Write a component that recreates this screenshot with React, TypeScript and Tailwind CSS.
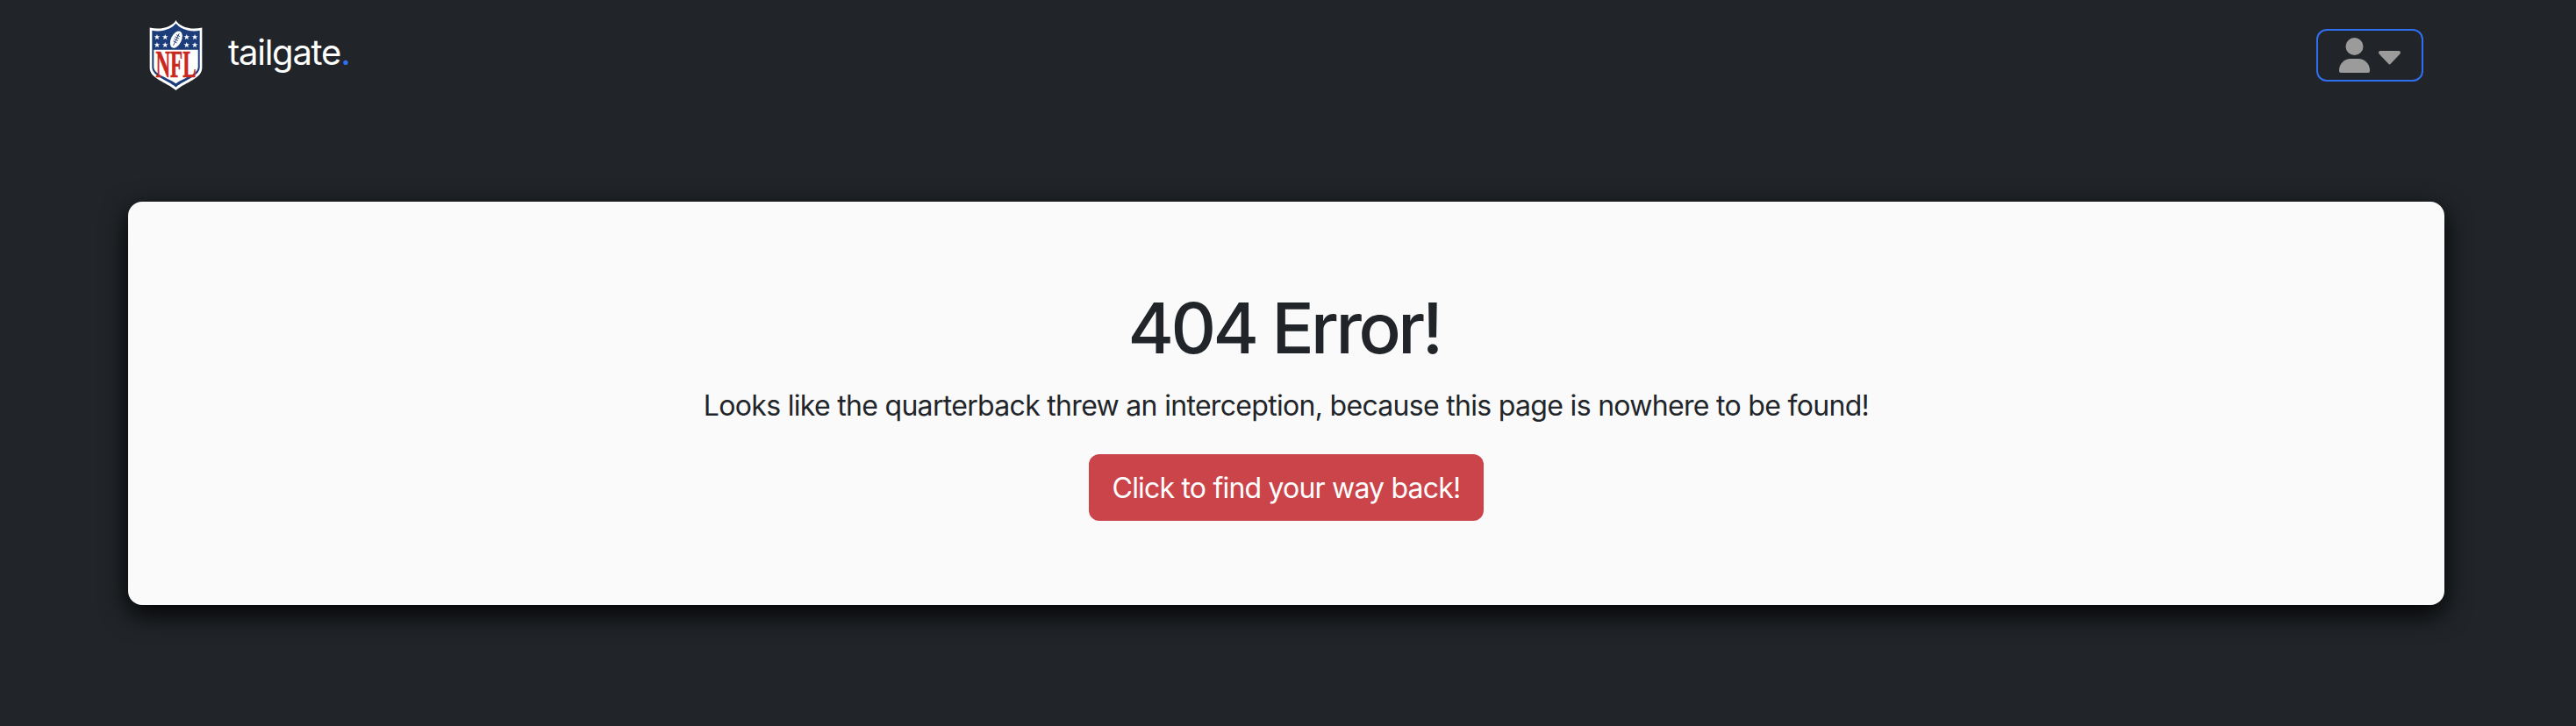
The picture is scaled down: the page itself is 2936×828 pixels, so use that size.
import React from 'react';

function Star({ x, y }: { x: number; y: number }) {
  return (
    <polygon
      transform={`translate(${x} ${y}) scale(10.5)`}
      points="0,-1 0.24,-0.31 0.95,-0.31 0.38,0.12 0.59,0.81 0,0.4 -0.59,0.81 -0.38,0.12 -0.95,-0.31 -0.24,-0.31"
      fill="#ffffff"
    />
  );
}

function NflLogo() {
  const shield = 'M180 68 C190 88 226 104 270 94 V232 C270 270 214 280 180 310 C146 280 90 270 90 232 V94 C134 104 170 88 180 68 Z';
  const inner = 'M180 80 C192 96 226 112 262 104 V230 C262 262 210 274 180 299 C150 274 98 262 98 230 V104 C134 112 168 96 180 80 Z';
  return (
    <svg viewBox="88 66 184 246" className="w-[61px] h-[82px] shrink-0">
      <path d={shield} fill="#ffffff" />
      <path d={inner} fill="#1c3d7a" />
      <path d="M104 170 H256 V229 C256 256 208 266 180 286 C152 266 104 256 104 229 Z" fill="#ffffff" />
      <Star x={115} y={127} />
      <Star x={143} y={127} />
      <Star x={217} y={127} />
      <Star x={245} y={127} />
      <Star x={115} y={154} />
      <Star x={143} y={154} />
      <Star x={217} y={154} />
      <Star x={245} y={154} />
      <g transform="rotate(26 181 135)">
        <ellipse cx="181" cy="135" rx="18" ry="31" fill="#ffffff" />
        <path d="M181 112 V158 M174 120 H188 M173 128 H189 M173 136 H189 M174 144 H188" stroke="#1c3d7a" strokeWidth="2.5" fill="none" />
      </g>
      <text
        x="180"
        y="264"
        textAnchor="middle"
        fill="#c8281e"
        stroke="#c8281e"
        strokeWidth="2"
        fontFamily="'Liberation Serif', serif"
        fontWeight="700"
        fontSize="134"
        transform="translate(180 0) scale(0.52 1) translate(-180 0)"
      >
        NFL
      </text>
    </svg>
  );
}

function UserIcon() {
  return (
    <svg viewBox="0 0 35 40" className="w-[35px] h-[40px]" fill="#9b9b9b">
      <circle cx="17.5" cy="10" r="10" />
      <path d="M2 40 a2 2 0 0 1 -2 -2 v-1 C0 30 6 24 13 24 h9 C29 24 35 30 35 37 v1 a2 2 0 0 1 -2 2 Z" />
    </svg>
  );
}

function CaretIcon() {
  return (
    <svg viewBox="0 0 25 16" className="w-[25px] h-[16px] mt-[5px]" fill="#9b9b9b">
      <path d="M2 0 H23 a2 2 0 0 1 1.4 3.4 L14 14.6 a2 2 0 0 1 -3 0 L.6 3.4 A2 2 0 0 1 2 0 Z" />
    </svg>
  );
}

export default function App() {
  return (
    <div className="min-h-screen bg-[#212529] font-['Inter',sans-serif] text-[#212529] overflow-hidden">
      <div className="w-[2640px] ml-[146px]">
        <nav className="h-[126px] px-[24px] flex items-center justify-between">
          <div className="flex items-center">
            <NflLogo />
            <span className="ml-[29px] mb-[6px] text-[40px] leading-[60px] tracking-[-1.25px] text-white">
              tailgate<span className="text-[#2f6ff0]">.</span>
            </span>
          </div>
          <button className="w-[122px] h-[60px] pl-[24px] flex items-center gap-[10px] border-2 border-[#2f6ff0] rounded-[12px]">
            <UserIcon />
            <CaretIcon />
          </button>
        </nav>

        <main className="mt-[104px] h-[460px] pt-[96px] bg-[#fafafa] rounded-[16px] shadow-[0_10px_30px_rgba(0,0,0,1)] flex flex-col items-center">
          <h1 className="text-[80px] leading-[96px] font-medium tracking-[-3.5px] mr-[5px] mb-[16px]">404 Error!</h1>
          <p className="mt-[1px] text-[32px] leading-[48px] tracking-[-0.69px] mb-[31px]">
            Looks like the quarterback threw an interception, because this page is nowhere to be found!
          </p>
          <button className="h-[76px] w-[450px] pt-[2px] bg-[#cb444a] text-white text-[32px] leading-[48px] tracking-[-0.8px] rounded-[12px]">
            Click to find your way back!
          </button>
        </main>
      </div>
    </div>
  );
}
